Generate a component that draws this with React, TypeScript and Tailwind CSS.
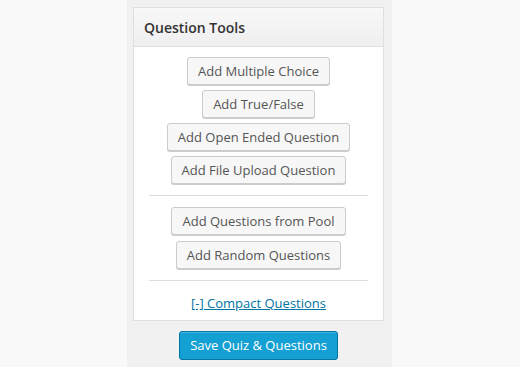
const toolButtons = [
  ['Add Multiple Choice', 'Add True/False', 'Add Open Ended Question', 'Add File Upload Question'],
  ['Add Questions from Pool', 'Add Random Questions'],
];

const ToolButton = ({ label }: { label: string }) => (
  <button className="h-[28px] px-[10px] text-[13px] leading-[26px] text-[#555] bg-[#f7f7f7] border border-[#cccccc] rounded-[3px] shadow-[0_1px_0_#cccccc] whitespace-nowrap">
    {label}
  </button>
);

export default function App() {
  return (
    <div className="w-[520px] h-[367px] bg-[#f9f9f9] flex font-['Open_Sans',sans-serif] overflow-hidden">
      <div className="ml-[127px] w-[265px] h-full bg-[#f1f1f1] pt-[7px] pl-[6px]">
        {/* Question Tools box */}
        <div className="w-[251px] bg-white border border-[#dfdfdf]">
          <div className="h-[39px] pl-[10px] pt-[1px] flex items-center bg-gradient-to-b from-[#f8f8f8] to-[#efefef] border-b border-[#dfdfdf]">
            <h3 className="text-[14px] font-semibold text-[#333]">Question Tools</h3>
          </div>

          <div className="pt-[10px] px-[15px] pb-[7px]">
            {toolButtons.map((group, i) => (
              <div key={i}>
                <div className={`flex flex-col items-center ${i === 0 ? 'gap-[5px]' : 'gap-[6px]'}`}>
                  {group.map((label) => (
                    <ToolButton key={label} label={label} />
                  ))}
                </div>
                <div className="mt-[11px] mb-[11px] border-t border-[#dddddd]" />
              </div>
            ))}
            <div className="text-center leading-[20px]">
              <a href="#" className="text-[13px] text-[#0074a2] underline">
                [-] Compact Questions
              </a>
            </div>
          </div>
        </div>

        <div className="w-[251px] flex justify-center mt-[10px]">
          <button className="h-[29px] px-[10px] text-[13px] leading-[27px] text-white bg-[#14a0d2] border border-[#0074a2] rounded-[3px] shadow-[inset_0_1px_0_rgba(120,200,230,0.5)] whitespace-nowrap">
            Save Quiz &amp; Questions
          </button>
        </div>
      </div>
    </div>
  );
}
